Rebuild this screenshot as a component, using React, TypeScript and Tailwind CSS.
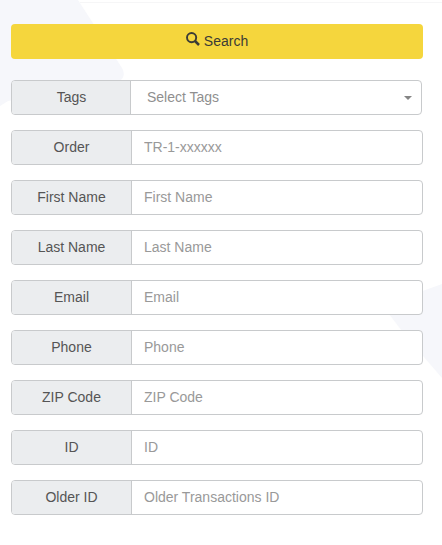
const fields = [
  { label: 'Order', placeholder: 'TR-1-xxxxxx' },
  { label: 'First Name', placeholder: 'First Name' },
  { label: 'Last Name', placeholder: 'Last Name' },
  { label: 'Email', placeholder: 'Email' },
  { label: 'Phone', placeholder: 'Phone' },
  { label: 'ZIP Code', placeholder: 'ZIP Code' },
  { label: 'ID', placeholder: 'ID' },
  { label: 'Older ID', placeholder: 'Older Transactions ID' },
];

function Backdrop() {
  return (
    <svg className="absolute inset-0 -z-10" width="442" height="545" viewBox="0 0 442 545" aria-hidden="true">
      <path d="M0 0H78L122 68Q127 77 118 82L8 101L0 106Z" fill="#f6f7fb" />
      <path d="M442 284L392 302Q384 306 389 314L405 335L442 378Z" fill="#f6f7fb" />
      <path d="M80 2.5H442" stroke="#f6f6f7" />
    </svg>
  );
}

function SearchIcon() {
  return (
    <svg width="14" height="14" viewBox="0 0 14 14" fill="none" stroke="#3b3b36" aria-hidden="true">
      <circle cx="5.6" cy="5.6" r="4.6" strokeWidth="1.9" />
      <path d="M9 9L13 13" strokeWidth="2.5" />
    </svg>
  );
}

export default function App() {
  return (
    <main className="relative isolate h-[545px] w-[442px] overflow-hidden bg-white pt-6 pr-[19px] pl-[11px] font-['Liberation_Sans',Arial,sans-serif] text-sm leading-5 text-[#555]">
      <Backdrop />
      <button className="flex h-[35px] w-full items-center justify-center gap-1 rounded bg-[#f5d63d] pb-px text-[#3b3b36]">
        <span className="-mt-1"><SearchIcon /></span>
        Search
      </button>
      <form className="mt-[21px] flex flex-col gap-[15px]">
        <div className="mr-px flex h-[35px] overflow-hidden rounded border border-[#c8cacc] bg-white">
          <label className="flex w-[119px] items-center justify-center border-r border-[#c8cacc] bg-[#ebedef] pb-0.5 pl-px">Tags</label>
          <button type="button" className="flex flex-1 items-center justify-between pr-[9px] pb-0.5 pl-4 text-[#8f8f8f]">
            Select Tags
            <span className="mt-0.5 border-x-4 border-t-4 border-x-transparent border-t-[#858585]" />
          </button>
        </div>
        {fields.map(({ label, placeholder }) => (
          <div key={label} className="flex h-[35px] overflow-hidden rounded border border-[#c8cacc] bg-white">
            <label className="flex w-[119px] shrink-0 items-center justify-center bg-[#ebedef] pb-0.5">{label}</label>
            <input
              aria-label={label}
              placeholder={placeholder}
              className="min-w-0 flex-1 border-l border-[#c8cacc] px-3 pb-0.5 outline-none placeholder:text-[#999]"
            />
          </div>
        ))}
      </form>
    </main>
  );
}
